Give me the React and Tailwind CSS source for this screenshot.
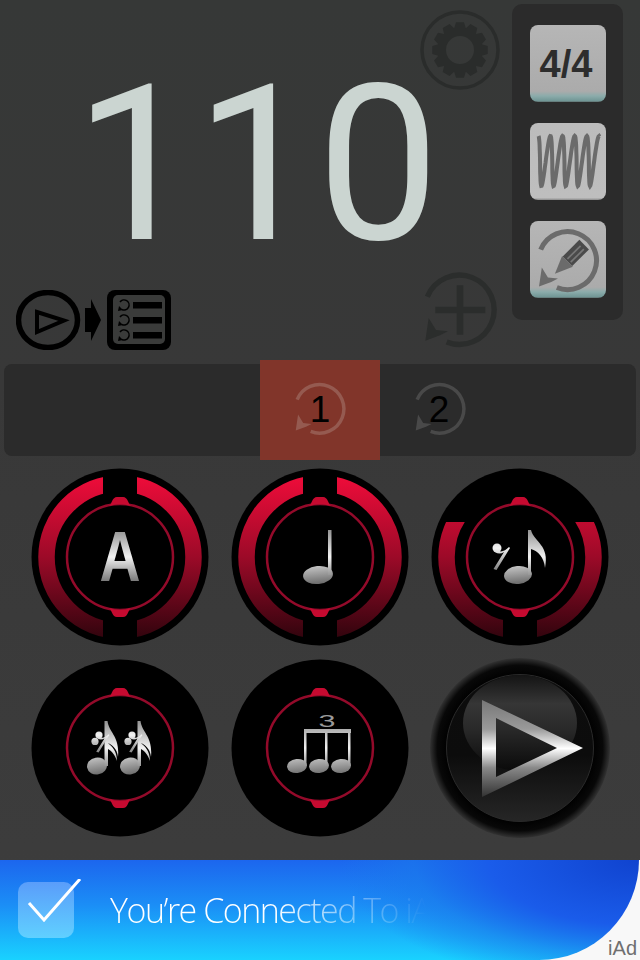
const gearPath = (() => {
  const teeth = 12;
  const pts = [];
  for (let i = 0; i < teeth; i++) {
    const a = (i / teeth) * Math.PI * 2;
    const step = (Math.PI * 2) / teeth;
    [[22.5, -0.5], [28, -0.27], [28, 0.27], [22.5, 0.5]].forEach(([r, o]) => {
      const t = a + o * step - Math.PI / 2;
      pts.push(`${(r * Math.cos(t)).toFixed(2)} ${(r * Math.sin(t)).toFixed(2)}`);
    });
  }
  return `M${pts.join('L')}Z M14 0A14 14 0 1 0 -14 0A14 14 0 1 0 14 0Z`;
})();

const springPath = (() => {
  const pts = [];
  for (let i = 0; i <= 160; i++) {
    const t = i / 160;
    const x = 7 + t * 61 + 1.5 * Math.cos(t * Math.PI * 2 * 5);
    const y = 38 - 25 * Math.cos(t * Math.PI * 2 * 5.02 + 0.1);
    pts.push(`${x.toFixed(1)} ${y.toFixed(1)}`);
  }
  return `M${pts.join('L')}`;
})();

// arc with an arrow head, used for the loop icons
const LoopArrow = ({ color, width = 8 }) => (
  <>
    <path d="M-49 -20A52 52 0 1 1 -20 48" fill="none" stroke={color} strokeWidth={width} />
    <polygon points="-52 46 -47 12 -36 30 -18 32 -30 38" fill={color} />
  </>
);

const Silver = ({ id }) => (
  <linearGradient id={id} gradientUnits="userSpaceOnUse" x1="0" y1="-28" x2="0" y2="28">
    <stop offset="0" stopColor="#8f8f8f" />
    <stop offset="0.5" stopColor="#f2f2f2" />
    <stop offset="0.68" stopColor="#bdbdbd" />
    <stop offset="1" stopColor="#666" />
  </linearGradient>
);

const Rest = ({ x, y, fill, scale = 1, double }) => (
  <g transform={`translate(${x} ${y}) scale(${scale})`} fill={fill}>
    <circle cx="0" cy="0" r="4.5" />
    {double && <circle cx="-5" cy="8" r="4.5" />}
    <path d="M0 2C4 5 8 3 12 -1L13 0L-0.5 22L-3.5 21L7 4C4 6 1 6 -2 4Z" />
  </g>
);

const Dial = ({ id, arcs, children }) => (
  <svg viewBox="-90 -90 180 180" className="w-[180px] h-[180px] -my-[2px]">
    <defs>
      <linearGradient id={`${id}-red`} gradientUnits="userSpaceOnUse" x1="0" y1="-82" x2="0" y2="82">
        <stop offset="0" stopColor="#f00c3a" />
        <stop offset="0.5" stopColor="#9c0a28" />
        <stop offset="1" stopColor="#30040d" />
      </linearGradient>
      <clipPath id={`${id}-low`}>
        <rect x="-90" y="-35" width="180" height="125" />
      </clipPath>
      <Silver id={`${id}-silver`} />
    </defs>
    <circle r="88.5" fill="#000" />
    {arcs && (
      <>
        <circle r="73.5" fill="none" stroke={`url(#${id}-red)`} strokeWidth="16.5" clipPath={arcs === 'low' ? `url(#${id}-low)` : undefined} />
        {arcs === 'full' && <rect x="-17" y="-86" width="34" height="28" fill="#000" />}
        <rect x="-17" y="58" width="34" height="28" fill="#000" />
      </>
    )}
    <circle r="53" fill="none" stroke="#930a2a" strokeWidth="2.500" />
    <path d="M-11 -51C-8 -53 -8 -60 -3 -60L3 -60C8 -60 8 -53 11 -51C4 -53.500 -4 -53.500 -11 -51Z" fill="#c60a30" />
    <path d="M-11 51C-8 53 -8 60 -3 60L3 60C8 60 8 53 11 51C4 53.500 -4 53.500 -11 51Z" fill="#c60a30" />
    {children(`url(#${id}-silver)`)}
  </svg>
);

const Sixteenth = ({ x, fill }) => (
  <g transform={`translate(${x} 0)`} fill={fill}>
    <ellipse cx="0" cy="18" rx="10" ry="8.500" transform="rotate(-10 0 18)" />
    <path d="M7.500 -27L10.500 -27C12 -15 23 -12 21 9C20 0 15 -3 11 -5C14 -2 20 2 20 13C17 5 14 3 11 1L11 18L7.500 18Z" />
  </g>
);

const SideButton = ({ strip, children }) => (
  <div className={`w-[76px] h-[77px] rounded-lg flex items-center justify-center ${strip ? 'bg-[linear-gradient(180deg,#b6b6b6_0%,#ababab_86%,#8cacab_92%,#6f9594_99%,#555_100%)]' : 'bg-[linear-gradient(180deg,#bcbcbc_0%,#bebebe_97%,#8a8a8a_100%)]'}`}>
    {children}
  </div>
);

export default function App() {
  return (
    <div className="w-[640px] h-[960px] flex flex-col overflow-hidden bg-[linear-gradient(180deg,#363837_0%,#383838_40%,#3d3d3d_100%)] font-['Liberation_Sans',sans-serif]">
      {/* tempo, settings and side panel */}
      <div className="flex h-[360px] shrink-0">
        <div className="w-[420px] pt-[56px]">
          <div className="pl-[74px] text-[218px] leading-none whitespace-nowrap text-[#cbd5d1] h-[220px] [font-kerning:none] font-['Roboto',sans-serif] tracking-[-1px]">110</div>
          <div className="mt-[14px] ml-[16px]">
            <svg width="156" height="60" viewBox="16 290 156 60">
              <ellipse cx="48" cy="320" rx="29.500" ry="27.500" fill="none" stroke="#000" strokeWidth="5.500" />
              <polygon points="37,312 64,320.500 37,332" fill="none" stroke="#000" strokeWidth="4" />
              <path d="M85 308H91V299L101 320L91 341V332H85Z" fill="#000" />
              <rect x="107" y="290" width="64" height="60" rx="8" fill="#000" />
              <rect x="113" y="295" width="52" height="49" rx="5" fill="#3a3b3a" />
              {[305, 320, 335].map((y) => (
                <g key={y}>
                  <rect x="133" y={y - 3} width="29" height="6.500" fill="#000" />
                  <path d={`M120 ${y - 3}A5 5 0 1 1 122 ${y + 4.500}`} fill="none" stroke="#000" strokeWidth="1.500" />
                  <polygon points={`${118},${y + 6} ${119},${y + 1} ${123},${y + 5}`} fill="#000" />
                </g>
              ))}
            </svg>
          </div>
        </div>

        <div className="w-[80px] py-[10px] flex flex-col justify-between items-center">
          <svg width="80" height="80" viewBox="-40 -40 80 80">
            <ellipse rx="38" ry="38" fill="none" stroke="#2a2c2b" strokeWidth="3.500" />
            <path d={gearPath} fill="#2a2c2b" fillRule="evenodd" />
          </svg>
          <svg width="80" height="80" viewBox="-60 -60 120 120">
            <LoopArrow color="#2b2d2c" width={8} />
            <path d="M-37 -5H-5V-37H5V-5H38V5H5V37H-5V5H-37Z" fill="#2b2d2c" />
          </svg>
        </div>

        <div className="ml-3 mt-1 w-[111px] h-[316px] rounded-[10px] bg-[#2b2b2b] pt-[21px] pl-[18px] flex flex-col gap-[21px]">
          <SideButton strip>
            <span className="text-[38px] font-bold leading-none text-[#2d2d2d] -ml-[4px]">4/4</span>
          </SideButton>
          <SideButton>
            <svg width="76" height="77" viewBox="0 0 76 77">
              <path d={springPath} fill="none" stroke="#6b6b6b" strokeWidth="4" />
            </svg>
          </SideButton>
          <SideButton strip>
            <svg width="76" height="77" viewBox="-45 -47 90 91">
              <g transform="scale(0.66)">
                <LoopArrow color="#6b6b6b" width={9} />
              </g>
              <g transform="translate(5 -5) rotate(45)">
                <path d="M-9 8H9L0 29Z" fill="#6b6b6b" />
                <rect x="-8" y="-20" width="16" height="28" fill="#4a4a4a" />
                <rect x="-3" y="-16" width="2" height="22" fill="#777" />
                <rect x="2.500" y="-16" width="2" height="22" fill="#777" />
              </g>
            </svg>
          </SideButton>
        </div>
      </div>

      {/* loop selector */}
      <div className="h-[100px] shrink-0 px-1 py-1">
        <div className="h-full rounded-lg bg-[#2b2b2b] flex pl-[256px]">
          <div className="w-[120px] -my-1 bg-[#81352a] flex items-center justify-center relative">
            <svg width="56" height="56" viewBox="-60 -60 120 120" className="-mt-[2px]">
              <LoopArrow color="#955a50" width={7.5} />
            </svg>
            <span className="absolute inset-0 flex items-center justify-center text-[37px] text-black -mt-[1px]">1</span>
          </div>
          <div className="w-[120px] flex items-center justify-center relative">
            <svg width="56" height="56" viewBox="-60 -60 120 120" className="-mt-[2px]">
              <LoopArrow color="#494949" width={7.5} />
            </svg>
            <span className="absolute inset-0 flex items-center justify-center text-[37px] text-black -mt-[1px] -ml-[2px]">2</span>
          </div>
        </div>
      </div>

      {/* note buttons */}
      <div className="grid grid-cols-3 px-5 pt-[9px] gap-y-[15px] justify-items-center">
        <Dial id="a" arcs="full">
          {(fill) => (
            <text x="0" y="24" textAnchor="middle" fontSize="71" fontWeight="700" textLength="41" lengthAdjust="spacingAndGlyphs" fontFamily="Liberation Sans" fill={fill}>A</text>
          )}
        </Dial>
        <Dial id="b" arcs="full">
          {(fill) => (
            <g fill={fill}>
              <ellipse cx="-2" cy="18" rx="15" ry="9" transform="rotate(-6 -2 18)" />
              <path d="M8 -27H11.500V18H8Z" />
            </g>
          )}
        </Dial>
        <Dial id="c" arcs="low">
          {(fill) => (
            <g fill={fill}>
              <ellipse cx="-2" cy="18" rx="14" ry="9" transform="rotate(-6 -2 18)" />
              <path d="M8 -27L11 -27C14 -15 30 -12 25 11C24 0 18 -6 11 -8L11 18L8 18Z" />
              <Rest x={-23} y={-9} fill={fill} />
            </g>
          )}
        </Dial>
        <Dial id="d">
          {(fill) => (
            <g>
              <Sixteenth x={-23} fill={fill} />
              <Sixteenth x={10} fill={fill} />
              <Rest x={-21} y={-13} fill={fill} scale={0.8} double />
              <Rest x={12} y={-13} fill={fill} scale={0.8} double />
            </g>
          )}
        </Dial>
        <Dial id="e">
          {(fill) => (
            <g fill={fill}>
              {[-23, -1, 21].map((x) => (
                <ellipse key={x} cx={x} cy="18" rx="10" ry="7" transform={`rotate(-6 ${x} 18)`} />
              ))}
              <rect x="-16" y="-19" width="47" height="4" />
              <rect x="-16" y="-19" width="2.500" height="37" />
              <rect x="5" y="-19" width="2.500" height="37" />
              <rect x="28" y="-19" width="2.500" height="37" />
              <text x="7" y="-21" textAnchor="middle" fontSize="17" textLength="17" lengthAdjust="spacingAndGlyphs" fontFamily="Liberation Sans" fill="#9a9a9a">3</text>
            </g>
          )}
        </Dial>
        <svg viewBox="-90 -90 180 180" className="w-[180px] h-[180px] -my-[2px]">
          <defs>
            <radialGradient id="rim" cx="0.5" cy="0.5" r="0.5">
              <stop offset="0.8" stopColor="#000" />
              <stop offset="0.92" stopColor="#080808" />
              <stop offset="1" stopColor="#333" />
            </radialGradient>
            <linearGradient id="disk" x1="0" y1="0" x2="0" y2="1">
              <stop offset="0" stopColor="#0d0d0d" />
              <stop offset="0.55" stopColor="#0c0c0c" />
              <stop offset="1" stopColor="#262626" />
            </linearGradient>
            <linearGradient id="bubble" x1="0" y1="0" x2="0" y2="1">
              <stop offset="0" stopColor="#141414" />
              <stop offset="0.3" stopColor="#363636" />
              <stop offset="0.55" stopColor="#2a2a2a" />
              <stop offset="1" stopColor="#0a0a0a" />
            </linearGradient>
            <linearGradient id="chrome" x1="0" y1="0" x2="0" y2="1">
              <stop offset="0" stopColor="#777" />
              <stop offset="0.3" stopColor="#9a9a9a" />
              <stop offset="0.5" stopColor="#ffffff" />
              <stop offset="0.7" stopColor="#888" />
              <stop offset="1" stopColor="#333" />
            </linearGradient>
          </defs>
          <circle r="90" fill="url(#rim)" />
          <circle r="73.500" fill="url(#disk)" stroke="#2a2a2a" strokeWidth="1" />
          <ellipse cx="0" cy="-25" rx="57" ry="48" fill="url(#bubble)" />
          <path d="M-38 -48L63 0L-38 49ZM-24 -30V29L37 0Z" fill="url(#chrome)" fillRule="evenodd" />
        </svg>
      </div>

      {/* iAd banner */}
      <div className="mt-auto h-[100px] bg-[#f8f8f8] relative">
        <div className="w-[639px] h-full rounded-br-[100px] bg-[radial-gradient(ellipse_300px_130px_at_100%_0%,#1043cf_0%,#1a5cea_50%,rgba(26,120,235,0.6)_75%,transparent_100%),linear-gradient(180deg,#1c66ee_0%,#1b8ef6_45%,#19d2ff_100%)] flex items-center pl-[18px]">
          <div className="relative w-14 h-14 rounded-[10px] bg-[linear-gradient(180deg,#5a9dfa_0%,#60d0ff_100%)] shrink-0">
            <svg width="70" height="60" viewBox="0 0 70 60" className="absolute -top-[3px] left-0">
              <path d="M11 24L26 41L62 0" fill="none" stroke="#fff" strokeWidth="3" />
            </svg>
          </div>
          <span className="ml-[36px] w-[330px] whitespace-nowrap overflow-hidden text-[34px] font-light font-['Open_Sans',sans-serif] tracking-[-1.500px] text-transparent bg-clip-text bg-[linear-gradient(90deg,#fff_0%,#fff_50%,rgba(255,255,255,0.45)_72%,rgba(255,255,255,0)_96%)]">You’re Connected To iA</span>
        </div>
        <span className="absolute right-[3px] bottom-[2px] text-[20px] leading-[20px] text-[#6f6f6f]">iAd</span>
      </div>
    </div>
  );
}
